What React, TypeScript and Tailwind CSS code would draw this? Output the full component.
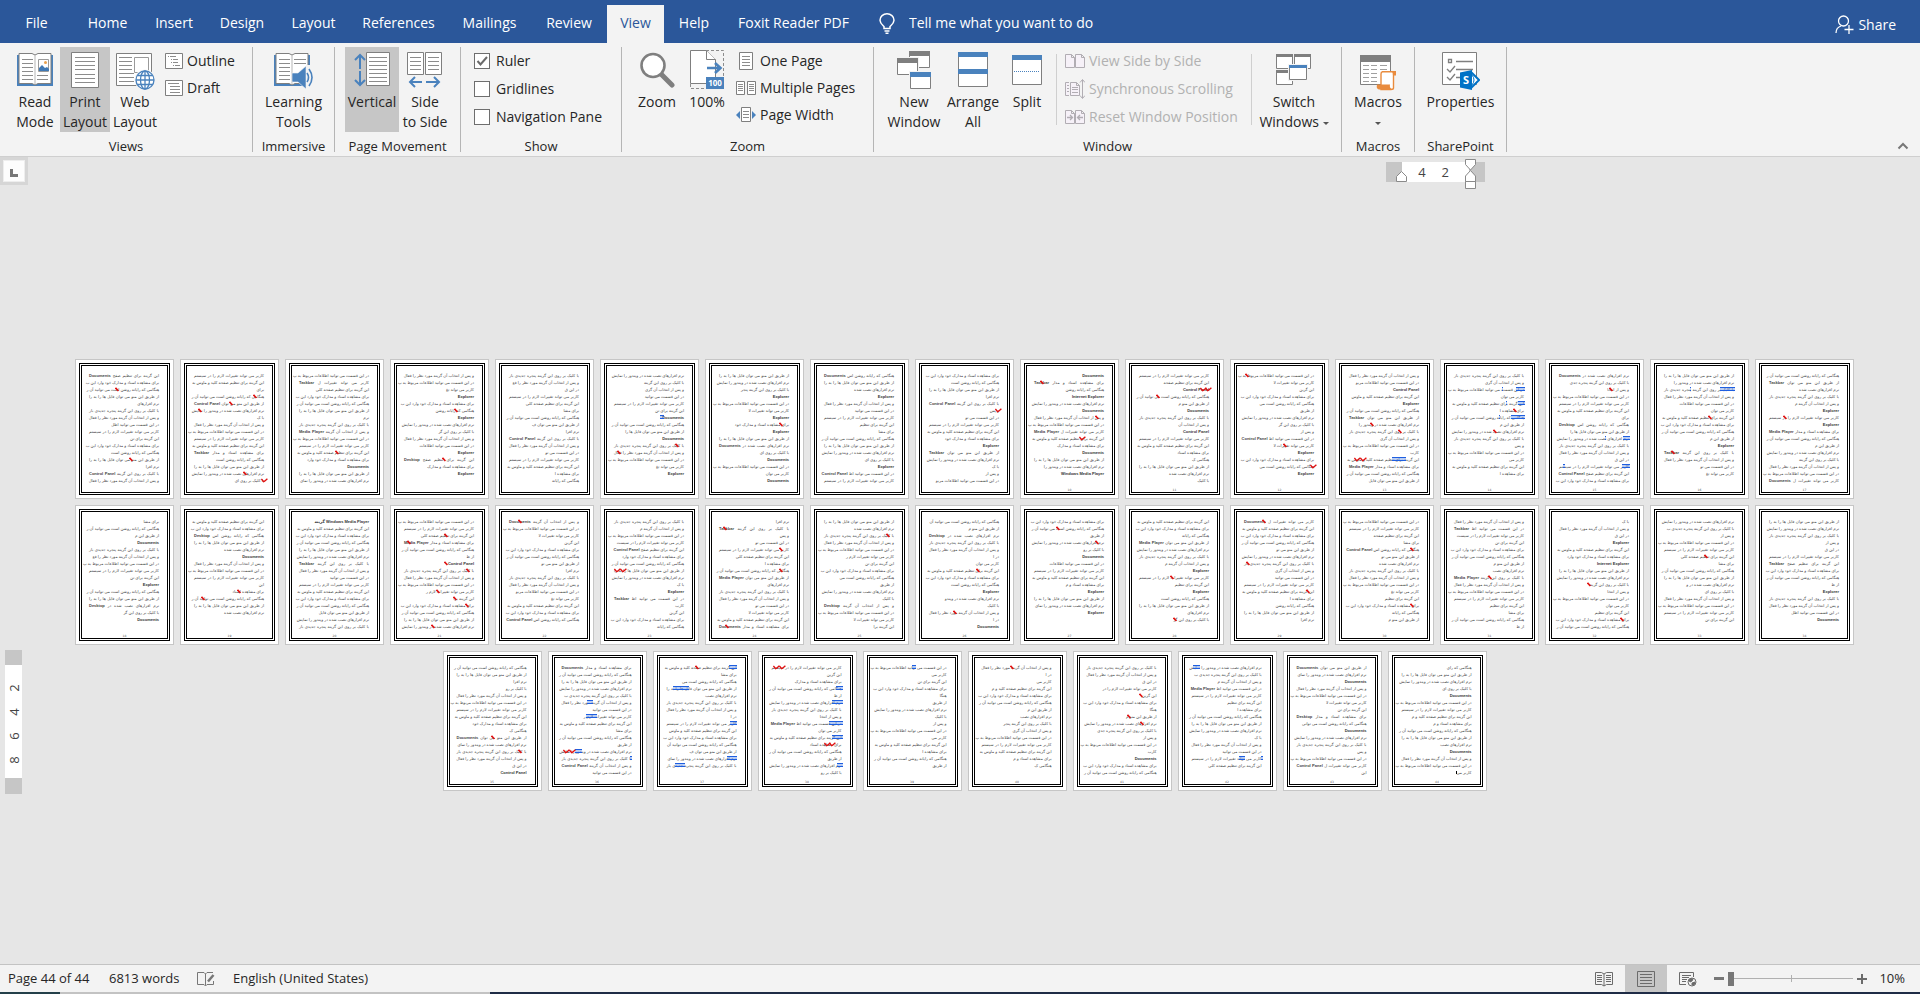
import React from 'react';

type Mark = [number, number];
type Highlight = [number, number, number];

interface PageData {
  // one character per line: 0 empty, 1-9 tenths of the line, F full line, a-g bold heading
  lines: string;
  ticks?: Mark[];
  waves?: Mark[];
  highlights?: Highlight[];
  caret?: Mark;
}

const pages: PageData[] = [
  { lines: 'FFFF3FF6F4F6F2FF', ticks: [[3, 26], [13, 40]] },
  { lines: 'FF1FFF1FFFFF6FF4', ticks: [[4, 59], [5, 35], [6, 4], [15, 49]], waves: [[16, 67]] },
  { lines: 'FF7FFF1FFFFF8cF9', ticks: [[12, 36]] },
  { lines: 'FF4bF5bF5F7bF6b0', ticks: [[6, 50], [13, 38]] },
  { lines: 'F92F72F62FF4FF34' },
  { lines: 'F655F4cF8cFFF4b0', ticks: [[11, 61], [12, 3]], highlights: [[7, 46, 4]] },
  { lines: 'FF7bF6b7bFF4cF3c', ticks: [[8, 60]] },
  { lines: 'FF5bF5F52FFF4bFF' },
  { lines: 'F6F2F14FF7bFF128', waves: [[6, 66]] },
  { lines: 'cF5eFcFFFF6cF8f0', ticks: [[2, 6], [7, 61]], waves: [[10, 45]] },
  { lines: 'F6dF4cF4dFF42F52', ticks: [[4, 17]], waves: [[3, 61], [3, 66]] },
  { lines: 'F62F72F52F6bF7b0', ticks: [[1, 1], [11, 39]], waves: [[14, 66]] },
  { lines: 'F8d9bFF8F5F1FFF7', ticks: [[8, 21], [9, 49]], waves: [[13, 5], [13, 11]], highlights: [[13, 43, 14]] },
  { lines: 'F5F3F3F3FF1F2F30', ticks: [[6, 59], [9, 39]], highlights: [[3, 62, 9], [5, 64, 7], [7, 57, 14], [3, 48, 1], [5, 52, 1], [7, 45, 1]] },
  { lines: 'F83FFF1F8FFF2FFF', ticks: [[3, 50]], highlights: [[10, 64, 7], [14, 63, 8], [10, 46, 1], [14, 4, 2]] },
  { lines: 'F8FF73FFF3bFF440', ticks: [[7, 44], [12, 7]], highlights: [[3, 56, 15], [3, 26, 1]] },
  { lines: 'FF5F6bFbFF3F6FFF', ticks: [[7, 14]] },
  { lines: '2F3cF9FF4bFFF5c0' },
  { lines: 'FFFF5cFFF14FF500', ticks: [[11, 43], [12, 7]] },
  { lines: 'gFFFFFFF5FFFF7FF' },
  { lines: 'FF7FF1dFFF73FFFF', ticks: [[3, 40], [4, 3], [7, 40], [8, 62], [11, 32], [12, 49], [13, 61], [16, 27]] },
  { lines: 'FF62FF52FF84FFF0', ticks: [[1, 9]] },
  { lines: 'F6F9F8FFF1bF12F4', waves: [[8, 0], [8, 6]] },
  { lines: '2F14F73FF3FF46FF', ticks: [[2, 4], [5, 60], [8, 60], [16, 6]] },
  { lines: 'F5FFF74F72F2FF63', ticks: [[3, 62]] },
  { lines: '94FFF13FF6b72F1c', ticks: [[8, 47], [14, 24]] },
  { lines: 'FF2F3c7FF5bF9b00', ticks: [[2, 22], [4, 61]] },
  { lines: 'FF4FFF6bF5b6F350', ticks: [[9, 31], [15, 34]] },
  { lines: 'FFFF5FF55FF35F20', ticks: [[1, 18], [7, 2], [11, 62]] },
  { lines: 'FF62F55FFF45F440', ticks: [[5, 61], [13, 61]] },
  { lines: 'FF94FF44FFFF52F1', ticks: [[9, 34]] },
  { lines: '1F2bF8eFF63F35FF', ticks: [[10, 28], [15, 61]] },
  { lines: 'F92FF72FF64FFF40', ticks: [[6, 40]] },
  { lines: 'FFF22FFFF1bFF6c0' },
  { lines: 'FF23FFFF72F9FF2d', ticks: [[11, 34], [13, 61]] },
  { lines: 'FFFF9F57F2F2FFF5', waves: [[13, 1], [13, 7]], highlights: [[6, 25, 6], [8, 24, 11], [13, 13, 7], [14, 68, 2]] },
  { lines: 'F27F4FF1F9F969F0', ticks: [[1, 28]], highlights: [[1, 62, 8], [4, 6, 16], [9, 63, 7], [14, 60, 10], [15, 8, 10]] },
  { lines: 'F26F1FF3F3F4F2F3', waves: [[1, 1], [1, 7], [12, 52], [12, 57]], highlights: [[4, 64, 7], [6, 60, 11], [9, 57, 14], [11, 60, 11], [15, 65, 6]] },
  { lines: 'F24F12F22F2F3F20', highlights: [[1, 35, 4]] },
  { lines: 'F128FF3475FFF520', ticks: [[1, 28]] },
  { lines: 'FF282F14F82F1cFF', ticks: [[5, 52], [8, 40], [9, 53]] },
  { lines: 'F96FF53FFF1F5F70', highlights: [[1, 1, 7], [14, 47, 6], [14, 69, 2]] },
  { lines: 'F9cFF64F8cFF1FF1' },
  { lines: '3FF4cFF85FF4cFF2', caret: [16, 54] },
];

const phrases = [
  'این گزینه برای تنظیم صفحه کلید و ماوس به کار می رود',
  'در این قسمت می توانید اطلاعات مربوط به پوشه را ببینید',
  'با کلیک بر روی این گزینه پنجره جدیدی باز می شود که',
  'از طریق این منو می توان فایل ها را به راحتی حذف کرد',
  'برای مشاهده اسناد و مدارک خود وارد این بخش شوید تا',
  'کاربر می تواند تغییرات لازم را در سیستم اعمال نماید',
  'و پس از انتخاب آن گزینه مورد نظر را فعال می کنیم تا',
  'نرم افزارهای نصب شده در ویندوز را نمایش می دهد و',
  'هنگامی که رایانه روشن است می توانید آن را تغییر دهید',
];

const terms = ['Documents', 'Control Panel', 'Media Player', 'Desktop', 'Taskbar'];

const headings: Record<string, string> = {
  a: 'Run',
  b: 'Explorer',
  c: 'Documents',
  d: 'Control Panel',
  e: 'Internet Explorer',
  f: 'Windows Media Player',
  g: 'Windows Media Player گزینه',
};

const Line: React.FC<{ code: string; seed: number }> = ({ code, seed }) => {
  if (code === '0') return <div className="h-[7px]" />;
  if (headings[code]) return <div className="h-[7px] font-bold text-[#333]">{headings[code]}</div>;
  const phrase = phrases[seed % phrases.length];
  if (code === 'F') {
    const withTerm = seed % 7 === 0;
    return (
      <div className="h-[7px] [text-align-last:justify]">
        {phrase.slice(0, withTerm ? 24 : 40)}
        {withTerm && <b className="text-[#444]"> {terms[seed % terms.length]}</b>}
      </div>
    );
  }
  return <div className="h-[7px]">{phrase.slice(0, Math.round(Number(code) * 4.2))}</div>;
};

const PageThumb: React.FC<{ page: PageData; index: number }> = ({ page, index }) => (
  <article className="w-[99px] h-[140px] shrink-0 bg-white border border-[#c6c6c6] p-[3px]">
    <div className="relative h-full border-3 border-double border-black px-[7px] pt-[6px]">
      <div dir="rtl" className="relative w-[70px] whitespace-nowrap text-[4px] leading-[7px] text-[#444] font-['Liberation_Sans','DejaVu_Sans',sans-serif]">
        {page.lines.split('').map((code, i) => (
          <Line key={i} code={code} seed={index * 5 + i * 4} />
        ))}
        {page.highlights?.map(([line, left, width], i) => (
          <span key={i} className="absolute h-1 border-y border-[#1f5fe0] bg-[#1f5fe0]/30" style={{ top: line * 7 - 6, left, width }} />
        ))}
        {page.ticks?.map(([line, left], i) => (
          <svg key={i} className="absolute" style={{ top: line * 7 - 6, left }} width="4" height="5" viewBox="0 0 4 5">
            <path d="M0.5 0.8 3.4 4" stroke="#e01010" strokeWidth="1.6" />
          </svg>
        ))}
        {page.waves?.map(([line, left], i) => (
          <svg key={i} className="absolute" style={{ top: line * 7 - 6, left }} width="7" height="5" viewBox="0 0 7 5">
            <path d="M0.4 1 2.6 3.6 3.6 3.2 6.4 0.8" fill="none" stroke="#e01010" strokeWidth="1.4" />
          </svg>
        ))}
        {page.caret && (
          <span className="absolute w-px h-[3px] bg-black" style={{ top: page.caret[0] * 7 - 5, left: page.caret[1] }} />
        )}
      </div>
      {index > 8 && (
        <span className="absolute inset-x-0 bottom-0 text-center text-[3px] leading-[4px] text-[#555] font-['DejaVu_Sans',sans-serif]">
          {index + 1}
        </span>
      )}
    </div>
  </article>
);

const rows = (x1: number, x2: number, ys: number[]) => ys.map((y) => `M${x1} ${y + 0.5}H${x2}`).join('');

const BookPages = () => (
  <>
    <path d="M1 8h36v31H1z" fill="#4a82bd" />
    <path d="M3 6.5h13l3 1.5 3-1.5h13v30H22l-3 1.5-3-1.5H3z" fill="#fff" stroke="#7f7f7f" />
    <path d="M19 8v29" stroke="#b5b5b5" />
    <path d={rows(6, 17, [12, 16, 20, 24, 28, 32])} stroke="#8c8c8c" />
  </>
);

const ReadIcon = () => (
  <svg width="38" height="44" viewBox="0 0 38 44">
    <BookPages />
    <path d={rows(21, 32, [28, 32])} stroke="#8c8c8c" />
    <path d="M22.5 12.5h10v12h-10z" fill="#fff" stroke="#9a9a9a" />
    <path d="M23 24v-3l3-3 3 3 2-1 2 2v2z" fill="#3f78b4" />
    <circle cx="29.5" cy="15.5" r="1.5" fill="#e9a04c" />
  </svg>
);

const PrintIcon = () => (
  <svg width="28" height="44" viewBox="0 0 28 44">
    <path d="M.5 5.5h27v35H.5z" fill="#fff" stroke="#7f7f7f" />
    <path d={rows(4, 24, [10, 14, 18, 22, 27, 31, 35])} stroke="#8c8c8c" />
  </svg>
);

const WebIcon = () => (
  <svg width="40" height="44" viewBox="0 0 40 44">
    <path d="M1.5 6.5h35v32h-35z" fill="#fff" stroke="#7f7f7f" />
    <path d={rows(4, 17, [10, 14, 18, 22]) + rows(4, 19, [26, 30, 34])} stroke="#8c8c8c" />
    <path d="M19.5 10.5h14v15h-14z" fill="#fff" stroke="#9a9a9a" />
    <circle cx="30" cy="33" r="10.5" fill="#f3f3f3" />
    <g fill="#fff" stroke="#4a82bd" strokeWidth="1.3">
      <circle cx="30" cy="33" r="9" />
      <ellipse cx="30" cy="33" rx="4.5" ry="9" />
      <path d="M30 24v18M21 33h18M22.5 28.5h15M22.5 37.5h15" />
    </g>
  </svg>
);

const LearningIcon = () => (
  <svg width="42" height="44" viewBox="0 0 42 44">
    <BookPages />
    <path d={rows(21, 33, [12, 16])} stroke="#8c8c8c" />
    <path d="M19 26h6l8-7v23l-8-7h-6z" fill="#4a82bd" stroke="#f3f3f3" strokeWidth=".6" />
    <path d="M33 18h8v23h-8z" fill="#f3f3f3" />
    <path d="M34 26q3 4.5 0 9M36 22q6 8.5 0 17" fill="none" stroke="#4a82bd" strokeWidth="1.6" />
  </svg>
);

const VerticalIcon = () => (
  <svg width="36" height="44" viewBox="0 0 36 44">
    <path d="M12.5 5.5h23v33h-23z" fill="#fff" stroke="#7f7f7f" />
    <path d={rows(15, 33, [10, 14, 18, 22, 26, 30, 34])} stroke="#8c8c8c" />
    <path d="M6 8v14M6 24v14M1 13l5-5 5 5M1 33l5 5 5-5" fill="none" stroke="#4a82bd" strokeWidth="2" />
  </svg>
);

const SideIcon = () => (
  <svg width="36" height="44" viewBox="0 0 36 44">
    <path d="M.5 5.5h16v22H.5zM18.5 5.5h16v22h-16z" fill="#fff" stroke="#7f7f7f" />
    <path d={rows(3, 14, [10, 14, 18, 22]) + rows(21, 32, [10, 14, 18, 22])} stroke="#8c8c8c" />
    <path d="M3 35h12M19 35h13M8 30l-5 5 5 5M27 30l5 5-5 5" fill="none" stroke="#4a82bd" strokeWidth="2" />
  </svg>
);

const ZoomIcon = () => (
  <svg width="36" height="44" viewBox="0 0 36 44">
    <path d="M22 27 33 38" stroke="#7f7f7f" strokeWidth="5" strokeLinecap="round" />
    <circle cx="14" cy="18.5" r="11.5" fill="#fff" stroke="#7f7f7f" strokeWidth="2.6" />
  </svg>
);

const HundredIcon = () => (
  <svg width="34" height="44" viewBox="0 0 34 44">
    <path d="M16 3.5h17.5v38H.5v-5" fill="none" stroke="#8c8c8c" strokeDasharray="3 2" />
    <path d="M.5 3.5h16l9 9v24H.5z" fill="#fff" stroke="#7f7f7f" />
    <path d="M16.5 3.5v9h9" fill="#fff" stroke="#7f7f7f" />
    <path d="M17 21h13M25 16l5.500 5-5.500 5" fill="none" stroke="#4a82bd" strokeWidth="2.6" />
    <path d="M16 30h18v12H16z" fill="#4a82bd" />
    <text x="25" y="39" textAnchor="middle" fontSize="8" fontWeight="700" fill="#fff">100</text>
  </svg>
);

const NewWindowIcon = () => (
  <svg width="36" height="44" viewBox="0 0 36 44">
    <path d="M13.5 4.5h20v16h-20z" fill="#fff" stroke="#7f7f7f" />
    <path d="M13 4h21v5H13z" fill="#7f7f7f" />
    <path d="M0 10h23v19H0z" fill="#f3f3f3" />
    <path d="M1.5 11.5h20v16h-20z" fill="#fff" stroke="#7f7f7f" />
    <path d="M1 11h21v5H1z" fill="#7f7f7f" />
    <path d="M13 24h23v19H13z" fill="#f3f3f3" />
    <path d="M14.5 25.5h20v16h-20z" fill="#fff" stroke="#7f7f7f" />
    <path d="M14 25h21v5H14z" fill="#4a82bd" />
  </svg>
);

const ArrangeIcon = () => (
  <svg width="30" height="44" viewBox="0 0 30 44">
    <path d="M.5 5.5h29v34H.5z" fill="#fff" stroke="#7f7f7f" />
    <path d="M0 5h30v5H0zM0 22h30v5H0z" fill="#4a82bd" />
  </svg>
);

const SplitIcon = () => (
  <svg width="30" height="44" viewBox="0 0 30 44">
    <path d="M.5 8.5h29v29H.5z" fill="#fff" stroke="#7f7f7f" />
    <path d="M0 8h30v5H0z" fill="#4a82bd" />
    <path d="M2 24.5h26" stroke="#4a82bd" strokeDasharray="1 1" />
  </svg>
);

const SwitchIcon = () => (
  <svg width="36" height="44" viewBox="0 0 36 44">
    <path d="M.5 7.5h16v14H.5zM18.5 7.5h16v14h-16zM.5 23.5h16v14H.5z" fill="#fff" stroke="#7f7f7f" />
    <path d="M0 7h17v3H0zM18 7h17v3H18zM0 23h17v3H0z" fill="#7f7f7f" />
    <path d="M12 17h20v17H12z" fill="#f3f3f3" />
    <path d="M13.5 18.5h17v14h-17z" fill="#fff" stroke="#7f7f7f" />
    <path d="M13 18h18v3H13z" fill="#4a82bd" />
  </svg>
);

const MacrosIcon = () => (
  <svg width="36" height="44" viewBox="0 0 36 44">
    <path d="M.5 8.5h30v29H.5z" fill="#fff" stroke="#7f7f7f" />
    <path d="M0 8h31v7H0z" fill="#7f7f7f" />
    <path d={rows(3, 9, [18, 22, 26, 30, 34]) + rows(11, 17, [18, 22, 26, 30, 34]) + rows(20, 27, [18, 22])} stroke="#a0a0a0" />
    <path d="M22 24.8h12.5q1 0 1 3h-2V41q0 1.5-2.5 1.5H21V27q0-2 1.5-2.2z" fill="#fff" stroke="#e98b3d" strokeWidth="1.4" />
    <path d="M17 37.5h13q-1 4 3 5H19q-3-.5-2-5zM32 24h4v4h-3z" fill="#e98b3d" />
  </svg>
);

const PropertiesIcon = () => (
  <svg width="38" height="44" viewBox="0 0 38 44">
    <path d="M.5 5.5h34v32H.5z" fill="#fff" stroke="#7f7f7f" />
    <path d="M6.5 12.5h3v3h-3zM14 14.5h17M14 22.5h17M14 30.5h5M5 22l3 3 5-6M5 30l3 3 5-6" fill="none" stroke="#7f7f7f" strokeWidth="1.3" />
    <path d="M29 25l8 8-8 8" fill="#fff" stroke="#0072c6" strokeWidth="2" />
    <path d="M30 28q4 5 0 10" fill="none" stroke="#0072c6" />
    <path d="M18 25.5 30 23v20l-12-2.5z" fill="#0072c6" />
    <text x="24" y="37" textAnchor="middle" fontSize="11" fontWeight="700" fill="#fff">S</text>
  </svg>
);

const OutlineIcon = () => (
  <svg width="18" height="16" viewBox="0 0 18 16">
    <path d="M.5.5h17v15H.5z" fill="#fff" stroke="#7f7f7f" />
    <path d="M3 3.5h1M5 3.5h6M6 6.5h1M8 6.5h5M6 9.5h1M8 9.5h5M8 12.5h1M10 12.5h5" stroke="#8c8c8c" />
  </svg>
);

const DraftIcon = () => (
  <svg width="18" height="16" viewBox="0 0 18 16">
    <path d="M.5.5h17v15H.5z" fill="#fff" stroke="#7f7f7f" />
    <path d="M3 3.5h11M5 6.5h10M5 9.5h10M5 12.5h10" stroke="#8c8c8c" />
  </svg>
);

const OnePageIcon = () => (
  <svg width="20" height="18" viewBox="0 0 20 18">
    <path d="M3.5.5h13v17h-13z" fill="#fff" stroke="#7f7f7f" />
    <path d={rows(6, 14, [4, 7, 10, 13])} stroke="#8c8c8c" />
  </svg>
);

const MultiPageIcon = () => (
  <svg width="20" height="16" viewBox="0 0 20 16">
    <path d="M.5 1.5h8v13h-8zM11.5 1.5h8v13h-8z" fill="#fff" stroke="#7f7f7f" />
    <path d={rows(2, 7, [4, 6, 8, 10]) + rows(13, 18, [4, 6, 8, 10])} stroke="#8c8c8c" />
  </svg>
);

const PageWidthIcon = () => (
  <svg width="20" height="16" viewBox="0 0 20 16">
    <path d="M5.5.5h9v14h-9z" fill="#fff" stroke="#7f7f7f" />
    <path d={rows(7, 13, [4, 7, 10])} stroke="#8c8c8c" />
    <path d="M4 4v8L0 8zM16 4v8l4-4z" fill="#4a82bd" />
  </svg>
);

const SideBySideIcon = () => (
  <svg width="20" height="16" viewBox="0 0 20 16" fill="#f6f1f8" stroke="#b1adb3">
    <path d="M.5 1.5h6l3 3v10h-9zM10.5 1.5h6l3 3v10h-9zM6.5 1.5v3h3M16.5 1.5v3h3" />
  </svg>
);

const SyncIcon = () => (
  <svg width="20" height="20" viewBox="0 0 20 20" fill="#f6f1f8" stroke="#b1adb3">
    <path d="M4 3.5H.5v13H4M5.5 3.5h6l3 3v10h-9zM11.5 3.5v3h3M2 6.5h2M2 9.5h2M2 12.5h2M7 8.5h6M7 10.5h6M7 13.5h6" />
    <path d="M17.5 1v18M15 3.5l2.5-3 2.5 3M15 16.5l2.5 3 2.5-3" fill="none" />
  </svg>
);

const ResetIcon = () => (
  <svg width="20" height="16" viewBox="0 0 20 16" fill="#f6f1f8" stroke="#b1adb3">
    <path d="M.5 1.5h6l3 3v10h-9zM10.5 1.5h6l3 3v10h-9zM6.5 1.5v3h3M16.5 1.5v3h3" />
    <path d="M2 8.5h5M5 6l2.5 2.5L5 11M18 8.5h-5M15 6l-2.5 2.5L15 11" fill="none" strokeWidth="1.3" />
  </svg>
);

const Caret = () => <span className="inline-block border-x-3 border-t-3 border-x-transparent border-t-[#555] align-middle" />;

const Group: React.FC<{ label: string; className: string; children: React.ReactNode }> = ({ label, className, children }) => (
  <section aria-label={label} className={`flex shrink-0 flex-col border-r border-[#b5b5b5] ${className}`}>
    <div className="flex h-[85px]">{children}</div>
    <div className="h-5 text-center text-[13px] leading-7">{label}</div>
  </section>
);

const BigButton: React.FC<{ icon: React.ReactNode; className: string; active?: boolean; children: React.ReactNode }> = ({
  icon,
  className,
  active,
  children,
}) => (
  <button
    type="button"
    className={`flex h-[85px] shrink-0 flex-col items-center whitespace-nowrap text-center leading-5 ${active ? 'bg-[#c6c6c6]' : ''} ${className}`}
  >
    <span className="block h-[45px]">{icon}</span>
    <span>{children}</span>
  </button>
);

const SmallButton: React.FC<{ icon: React.ReactNode; disabled?: boolean; children: React.ReactNode }> = ({ icon, disabled, children }) => (
  <button type="button" disabled={disabled} className={`flex items-center gap-1 whitespace-nowrap ${disabled ? 'h-7 text-[#b1b1b1]' : 'h-[27px]'}`}>
    {icon}
    {children}
  </button>
);

const tabs = [
  { name: 'File', width: 'w-[73px]' },
  { name: 'Home', width: 'w-[69px]' },
  { name: 'Insert', width: 'w-[64px]' },
  { name: 'Design', width: 'w-[72px]' },
  { name: 'Layout', width: 'w-[71px]' },
  { name: 'References', width: 'w-[99px]' },
  { name: 'Mailings', width: 'w-[83px]' },
  { name: 'Review', width: 'w-[76px]' },
  { name: 'View', width: 'w-[57px]' },
  { name: 'Help', width: 'w-[60px]' },
  { name: 'Foxit Reader PDF', width: 'w-[139px]' },
];

const TabBar = () => (
  <header className="flex h-[43px] items-end bg-[#2b579a] text-white">
    <nav className="flex">
      {tabs.map((tab) => (
        <button
          key={tab.name}
          type="button"
          className={`h-[38px] shrink-0 whitespace-nowrap pb-0.5 ${tab.width} ${tab.name === 'View' ? 'bg-[#f3f3f3] text-[#2b579a]' : ''}`}
        >
          {tab.name}
        </button>
      ))}
    </nav>
    <label className="flex h-[38px] items-center gap-[14px] pb-0.5 pl-4">
      <svg width="16" height="21" viewBox="0 0 16 21" fill="none" stroke="#fff" strokeWidth="1.5">
        <path d="M5 15.5v-2C3 11.5 1 10 1 7.2a7 6.4 0 0 1 14 0c0 2.8-2 4.300-4 6.3v2zM5.5 18h5M6.5 20.2h3" />
      </svg>
      <input aria-label="Tell me" placeholder="Tell me what you want to do" className="w-60 bg-transparent outline-none placeholder:text-white" />
    </label>
    <button type="button" className="ml-auto mr-6 flex h-9 items-center gap-1">
      <svg width="19" height="20" viewBox="0 0 19 20" fill="none" stroke="#fff" strokeWidth="1.3">
        <circle cx="8.5" cy="6" r="5" />
        <path d="M1 18c0-4 2-6 5-7M14 10v9M9.5 14.5h9" />
      </svg>
      Share
    </button>
  </header>
);

const Ribbon = () => (
  <div className="flex h-[114px] border-b border-[#cfcfcf] bg-[#f3f3f3] pt-1">
    <div className="flex h-[105px]">
      <Group label="Views" className="w-[253px]">
        <BigButton className="ml-[10px] w-[50px]" icon={<ReadIcon />}>Read<br />Mode</BigButton>
        <BigButton className="w-[50px]" active icon={<PrintIcon />}>Print<br />Layout</BigButton>
        <BigButton className="w-[50px]" icon={<WebIcon />}>Web<br />Layout</BigButton>
        <div className="ml-[5px]">
          <SmallButton icon={<OutlineIcon />}>Outline</SmallButton>
          <SmallButton icon={<DraftIcon />}>Draft</SmallButton>
        </div>
      </Group>
      <Group label="Immersive" className="w-[82px]">
        <BigButton className="w-full" icon={<LearningIcon />}>Learning<br />Tools</BigButton>
      </Group>
      <Group label="Page Movement" className="w-[126px]">
        <BigButton className="ml-[10px] w-[54px]" active icon={<VerticalIcon />}>Vertical</BigButton>
        <BigButton className="w-[52px]" icon={<SideIcon />}>Side<br />to Side</BigButton>
      </Group>
      <Group label="Show" className="w-[161px]">
        <div className="ml-[13px] flex flex-col">
          {['Ruler', 'Gridlines', 'Navigation Pane'].map((name) => (
            <label key={name} className="flex h-7 items-center gap-[6px] whitespace-nowrap">
              <span className="relative flex">
                <input
                  type="checkbox"
                  defaultChecked={name === 'Ruler'}
                  className="peer h-4 w-4 appearance-none border border-[#6e6e6e] bg-white"
                />
                <svg className="pointer-events-none absolute inset-0 hidden peer-checked:block" width="16" height="16" viewBox="0 0 16 16">
                  <path d="M3.5 8l3 3.5L13 4" fill="none" stroke="#6a6a6a" strokeWidth="2" />
                </svg>
              </span>
              {name}
            </label>
          ))}
        </div>
      </Group>
      <Group label="Zoom" className="w-[252px]">
        <BigButton className="ml-[10px] w-[50px]" icon={<ZoomIcon />}>Zoom</BigButton>
        <BigButton className="w-[50px]" icon={<HundredIcon />}>100%</BigButton>
        <div className="ml-1">
          <SmallButton icon={<OnePageIcon />}>One Page</SmallButton>
          <SmallButton icon={<MultiPageIcon />}>Multiple Pages</SmallButton>
          <SmallButton icon={<PageWidthIcon />}>Page Width</SmallButton>
        </div>
      </Group>
      <Group label="Window" className="w-[468px]">
        <BigButton className="ml-[10px] w-[60px]" icon={<NewWindowIcon />}>New<br />Window</BigButton>
        <BigButton className="w-[58px]" icon={<ArrangeIcon />}>Arrange<br />All</BigButton>
        <BigButton className="w-[50px]" icon={<SplitIcon />}>Split</BigButton>
        <div className="ml-1 mt-[7px] h-[71px] w-px bg-[#cfcfcf]" />
        <div className="ml-2 w-[186px]">
          <SmallButton disabled icon={<SideBySideIcon />}>View Side by Side</SmallButton>
          <SmallButton disabled icon={<SyncIcon />}>Synchronous Scrolling</SmallButton>
          <SmallButton disabled icon={<ResetIcon />}>Reset Window Position</SmallButton>
        </div>
        <div className="mt-[7px] h-[71px] w-px bg-[#cfcfcf]" />
        <BigButton className="ml-[2px] w-20" icon={<SwitchIcon />}>Switch<br />Windows <Caret /></BigButton>
      </Group>
      <Group label="Macros" className="w-[73px]">
        <BigButton className="w-full" icon={<MacrosIcon />}>Macros<br /><Caret /></BigButton>
      </Group>
      <Group label="SharePoint" className="w-[92px]">
        <BigButton className="w-full" icon={<PropertiesIcon />}>Properties</BigButton>
      </Group>
    </div>
    <button type="button" aria-label="Collapse the ribbon" className="mb-1 ml-auto mr-[11px] self-end">
      <svg width="12" height="12" viewBox="0 0 12 12">
        <path d="M1.5 8.5 6 4l4.5 4.5" fill="none" stroke="#777" strokeWidth="2" />
      </svg>
    </button>
  </div>
);

const HorizontalRuler = () => (
  <div className="flex h-7 items-start justify-between">
    <div className="h-7 w-7 bg-[#d6d6d6] p-[3px]">
      <div className="flex h-[22px] w-[22px] items-center justify-center border border-[#eee] bg-[#fdfdfd]">
        <svg width="8" height="8" viewBox="0 0 8 8" className="mt-1">
          <path d="M0 0h3v5h5v3H0z" fill="#777" />
        </svg>
      </div>
    </div>
    <div className="relative mr-[435px] mt-[5px] flex h-5 w-[99px] bg-[#c6c6c6] text-[13px] leading-5 text-[#444]">
      <div className="ml-4 flex w-[67px] justify-end gap-4 bg-white pr-5">
        <span>4</span>
        <span>2</span>
      </div>
      <svg className="absolute -top-1 left-0" width="99" height="32" viewBox="0 0 99 32" fill="#fff" stroke="#8a8a8a">
        <path d="M10.5 23.5v-5l5-5 5 5v5zM79.500 1.5h10v5l-5 5.5-5-5.500zM79.5 23.5v-5.500l5-5.5 5 5.5v5.500zM79.5 23.5h10v7h-10z" />
      </svg>
    </div>
  </div>
);

const VerticalRuler = () => (
  <div className="w-7 shrink-0 pl-[5px] pt-[465px]">
    <div className="h-[144px] w-[17px] bg-[#c6c6c6] py-[15px]">
      <div className="flex h-[113px] flex-col items-center gap-2 bg-white pt-[15px] text-[13px] leading-4 text-[#444]">
        {[2, 4, 6, 8].map((n) => (
          <span key={n} className="h-4 -rotate-90">{n}</span>
        ))}
      </div>
    </div>
  </div>
);

const StatusBar = () => (
  <footer>
    <div className="flex h-7 items-center border-t border-[#c3c3c3] bg-[#f3f3f3] pl-2 pr-[15px] text-[13px]">
      <span className="w-[101px]">Page 44 of 44</span>
      <span className="w-[88px]">6813 words</span>
      <svg width="18" height="16" viewBox="0 0 18 16" fill="none" stroke="#777">
        <path d="M8.5 14.5V3L7 1.500H.5v12H7l1.5 1.5 1.5-1.5h6.5V10M8.5 3 10 1.5h6" />
        <path d="M11 10.5 16.5 4" strokeWidth="2.5" />
      </svg>
      <span className="ml-[18px]">English (United States)</span>
      <div className="ml-auto flex h-full items-center">
        <button type="button" aria-label="Read Mode" className="flex h-full w-[42px] items-center justify-center">
          <svg width="18" height="16" viewBox="0 0 18 16" fill="none" stroke="#6b6b6b">
            <path d="M.5 1.5h6L9 3l2.5-1.5h6v12h-6L9 15l-2.5-1.5h-6zM9 3v12M2 4.5h5M2 6.5h5M2 8.5h5M2 10.5h5M11 4.5h5M11 6.5h5M11 8.5h5M11 10.5h5" />
          </svg>
        </button>
        <button type="button" aria-label="Print Layout" className="flex h-full w-[42px] items-center justify-center bg-[#c6c6c6]">
          <svg width="18" height="16" viewBox="0 0 18 16" fill="none" stroke="#6b6b6b">
            <path d="M.5.5h17v15H.5zM3 3.5h12M3 6.5h12M3 9.5h12M3 12.5h12" />
          </svg>
        </button>
        <button type="button" aria-label="Web Layout" className="flex h-full w-[42px] items-center justify-center">
          <svg width="18" height="16" viewBox="0 0 18 16" fill="none" stroke="#6b6b6b">
            <path d="M7 13.5H.5v-12h14V6M3 4.5h9M3 6.5h7M3 8.5h5M3 10.5h4" />
            <circle cx="13" cy="11" r="4" fill="#f3f3f3" />
            <path d="M10 9q2-2 4-1l-1 2-2 1zM13 12l3-1-1 3-2 0z" fill="#6b6b6b" />
          </svg>
        </button>
        <button type="button" aria-label="Zoom out" className="ml-[5px] h-[3px] w-[10px] bg-[#777]" />
        <div className="relative ml-1 flex items-center">
          <span className="absolute inset-x-0 h-px bg-[#b0b0b0]" />
          <span className="absolute left-1/2 h-[7px] w-px bg-[#b0b0b0]" />
          <input
            type="range"
            aria-label="Zoom level"
            min={10}
            max={190}
            defaultValue={10}
            className="relative h-[14px] w-[125px] appearance-none bg-transparent [&::-webkit-slider-thumb]:h-[14px] [&::-webkit-slider-thumb]:w-[6px] [&::-webkit-slider-thumb]:appearance-none [&::-webkit-slider-thumb]:bg-[#777]"
          />
        </div>
        <button type="button" aria-label="Zoom in" className="ml-1">
          <svg width="10" height="10" viewBox="0 0 10 10">
            <path d="M5 0v10M0 5h10" stroke="#6b6b6b" strokeWidth="2" />
          </svg>
        </button>
        <span className="ml-3">10%</span>
      </div>
    </div>
    <div className="flex h-[2px] bg-[#1f2c46]">
      <div className="w-[60px] bg-[#24404a]" />
      <div className="w-[430px] bg-[#c3c3c3]" />
    </div>
  </footer>
);

const App: React.FC = () => {
  return (
    <div className="flex min-h-screen flex-col bg-[#e6e6e6] font-['Open_Sans','Noto_Sans',sans-serif] text-sm text-[#262626]">
      <TabBar />
      <Ribbon />
      <HorizontalRuler />
      <main className="flex flex-1">
        <VerticalRuler />
        <div className="flex flex-1 flex-wrap content-start justify-center gap-[6px] pr-[19px] pt-[174px]">
          {pages.map((page, index) => (
            <PageThumb key={index} page={page} index={index} />
          ))}
        </div>
      </main>
      <StatusBar />
    </div>
  );
};

export default App;
